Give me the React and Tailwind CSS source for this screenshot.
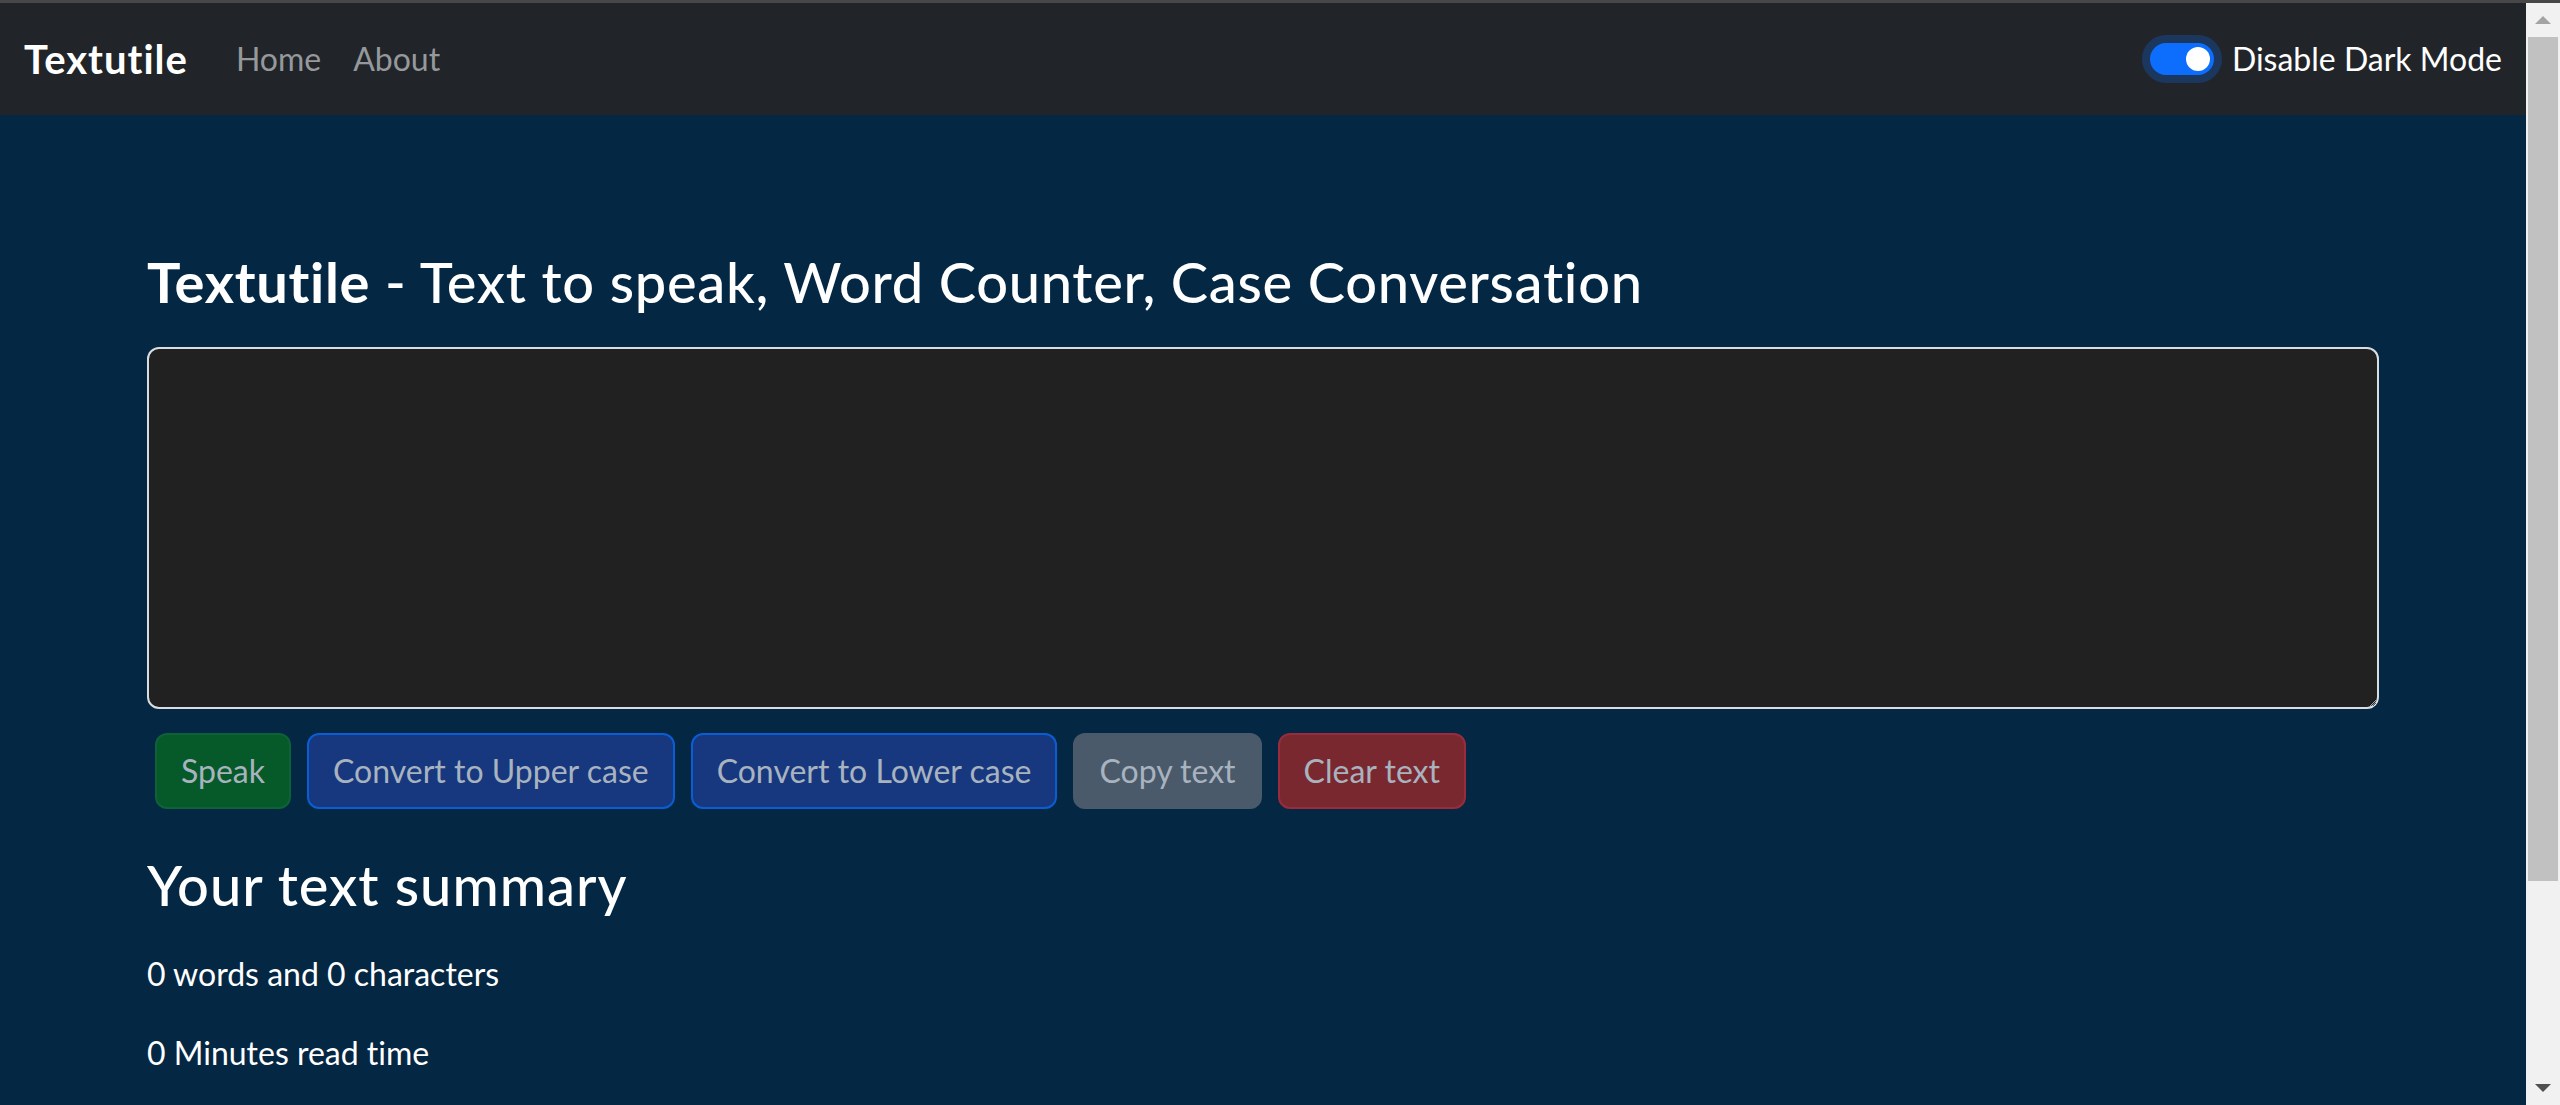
import React, { useState } from "react";

const font = { fontFamily: "Lato, 'Noto Sans', sans-serif" };

const ActionButton = ({ label, tone }) => {
  const tones = {
    green: "bg-[#065a29] border-[#0f6137]",
    blue: "bg-[#17387f] border-[#0b5dd3]",
    gray: "bg-[#4a5a6b] border-[#4a5a6b]",
    red: "bg-[#7a2830] border-[#982c3d]",
  };
  return (
    <button
      disabled
      className={`h-[76px] px-[24px] border-2 rounded-[12px] text-[32px] leading-[48px] text-[#a8b3bf] ${tones[tone]}`}
    >
      {label}
    </button>
  );
};

const Navbar = ({ dark, onToggle }) => (
  <nav className="h-[112px] bg-[#212529] flex items-center justify-between px-[24px]">
    <div className="flex items-center">
      <span className="text-[40px] font-bold tracking-[1px] text-white mr-[32px]">Textutile</span>
      <a className="text-[32px] text-[#96999c] px-[16px]">Home</a>
      <a className="text-[32px] text-[#96999c] px-[16px]">About</a>
    </div>
    <div className="flex items-center gap-[18px]">
      <button
        onClick={onToggle}
        className="w-[64px] h-[32px] rounded-full bg-[#0d6efd] border-2 border-[#0d6efd] shadow-[0_0_0_8px_#1c375e] flex items-center justify-end pr-[2px]"
      >
        <span className="w-[24px] h-[24px] rounded-full bg-white" />
      </button>
      <span className="text-[32px] text-white">
        {dark ? "Disable Dark Mode" : "Enable Dark Mode"}
      </span>
    </div>
  </nav>
);

const Scrollbar = () => (
  <div className="w-[34px] bg-[#f1f1f1] flex flex-col">
    <div className="h-[34px] flex items-center justify-center">
      <svg width="16" height="8" viewBox="0 0 16 8">
        <polygon points="0,8 8,0 16,8" fill="#a3a3a3" />
      </svg>
    </div>
    <div className="h-[844px] mx-[2px] bg-[#c1c1c1]" />
    <div className="flex-1" />
    <div className="h-[34px] flex items-center justify-center">
      <svg width="16" height="8" viewBox="0 0 16 8">
        <polygon points="0,0 16,0 8,8" fill="#505050" />
      </svg>
    </div>
  </div>
);

export default function App() {
  const [dark, setDark] = useState(true);
  const [text, setText] = useState("");
  const words = text.split(/\s+/).filter((w) => w.length > 0).length;

  return (
    <div
      className="w-[2560px] h-[1105px] overflow-hidden flex flex-col [font-variant-ligatures:none]"
      style={font}
    >
      <div className="h-[3px] bg-[#474747]" />
      <div className="flex flex-1 min-h-0">
        <div className="flex-1 flex flex-col bg-[#042743] text-white">
          <Navbar dark={dark} onToggle={() => setDark(!dark)} />
          <main className="w-[2280px] mx-auto px-[24px] pt-[133px]">
            <h1 className="text-[56px] leading-[67px] font-medium tracking-[0.7px] mb-[32px]">
              <span className="font-bold">Textutile</span> - Text to speak, Word Counter, Case Conversation
            </h1>
            <textarea
              value={text}
              onChange={(e) => setText(e.target.value)}
              className="block w-full h-[362px] bg-[#212121] border-2 border-[#d9dce0] rounded-[12px] text-white text-[32px] px-[24px] py-[12px] outline-none"
            />
            <div className="flex items-center gap-[16px] ml-[8px] mt-[24px]">
              <ActionButton label="Speak" tone="green" />
              <ActionButton label="Convert to Upper case" tone="blue" />
              <ActionButton label="Convert to Lower case" tone="blue" />
              <ActionButton label="Copy text" tone="gray" />
              <ActionButton label="Clear text" tone="red" />
            </div>
            <h2 className="text-[56px] leading-[67px] font-medium tracking-[1px] mt-[42px]">Your text summary</h2>
            <p className="text-[32px] leading-[48px] mt-[32px]">
              {words} words and {text.length} characters
            </p>
            <p className="text-[32px] leading-[48px] mt-[31px]">
              {0.008 * words} Minutes read time
            </p>
          </main>
        </div>
        <Scrollbar />
      </div>
    </div>
  );
}
